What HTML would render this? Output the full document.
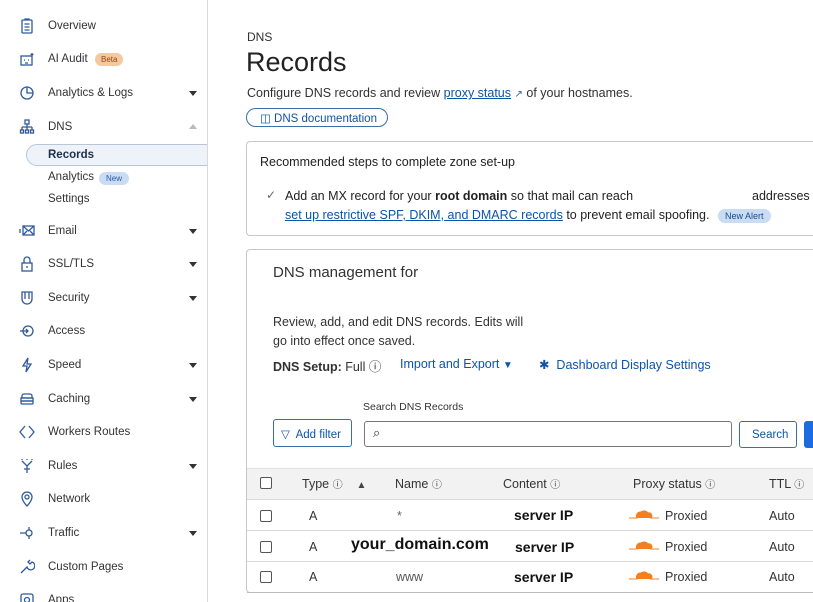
<!DOCTYPE html>
<html><head><meta charset="utf-8"><style>
*{margin:0;padding:0;box-sizing:border-box}
body{width:813px;height:602px;overflow:hidden;background:#fff;font-family:"Liberation Sans",sans-serif;color:#313131;position:relative}
.a{position:absolute;white-space:nowrap}
.sb{position:absolute;left:0;top:0;width:208px;height:602px;border-right:1px solid #d9d9d9;background:#fff;overflow:hidden}
.si{font-size:11.5px;color:#333}
.ic{position:absolute;left:19px;width:16px;height:16px}
.car{position:absolute;left:189px;width:0;height:0;border-left:4px solid transparent;border-right:4px solid transparent;border-top:5px solid #333}
.blue{color:#0b54a8}
.card{position:absolute;border:1px solid #c7c7c7;border-right:none;border-radius:4px 0 0 4px;background:#fff}
.cb{position:absolute;left:260px;width:12px;height:12px;border:1px solid #555;border-radius:2px;background:#fff}
.row{position:absolute;left:247px;width:566px;height:31px;border-top:1px solid #d9d9d9}
.t{font-size:12.5px;color:#333}
.b{font-weight:bold;color:#111;font-size:14px}
.cloud{position:absolute;left:629px;width:30px;height:10px}
</style></head><body>
<div class="sb">
<svg class="ic" style="top:18px" viewBox="0 0 16 16" fill="none" stroke="#2f5a9a" stroke-width="1.3"><rect x="3" y="2" width="10" height="13" rx="1"/><path d="M6 2V1h4v1M5.5 6h5M5.5 9h5M5.5 12h5"/></svg>
<div class="a si" style="left:48px;top:20px">Overview</div>
<svg class="ic" style="top:51px" viewBox="0 0 16 16" fill="none" stroke="#2f5a9a" stroke-width="1.3"><rect x="2" y="5" width="11" height="9"/><path d="M5 9h1M9 9h1M6 12h3M13 2v3M11.5 3.5h3"/></svg>
<div class="a si" style="left:48px;top:53px">AI Audit</div>
<div class="a" style="left:95px;top:53px;font-size:8px;background:#f6c8a0;color:#8a4a10;border-radius:8px;padding:2px 6px">Beta</div>
<svg class="ic" style="top:85px" viewBox="0 0 16 16" fill="none" stroke="#2f5a9a" stroke-width="1.3"><circle cx="8" cy="8" r="6"/><path d="M8 2v6h6"/></svg>
<div class="a si" style="left:48px;top:87px">Analytics &amp; Logs</div><div class="car" style="top:91px"></div>
<svg class="ic" style="top:119px" viewBox="0 0 16 16" fill="none" stroke="#2f5a9a" stroke-width="1.3"><rect x="6" y="1" width="4" height="4"/><path d="M8 5v3M3 8h10M3 8v3M8 8v3M13 8v3"/><rect x="1.5" y="11" width="3" height="3"/><rect x="6.5" y="11" width="3" height="3"/><rect x="11.5" y="11" width="3" height="3"/></svg>
<div class="a si" style="left:48px;top:121px">DNS</div>
<div class="a" style="left:189px;top:124px;border-left:4px solid transparent;border-right:4px solid transparent;border-bottom:5px solid #bbb"></div>
<div class="a" style="left:26px;top:144px;width:190px;height:22px;border:1px solid #b8c6d8;border-radius:11px 0 0 11px;background:#eef3f9"></div>
<div class="a si" style="left:48px;top:149px;font-weight:bold;color:#1d2f4a">Records</div>
<div class="a si" style="left:48px;top:171px">Analytics</div>
<div class="a" style="left:99px;top:172px;font-size:8px;background:#c9dcf4;color:#2a5aa0;border-radius:8px;padding:2px 7px">New</div>
<div class="a si" style="left:48px;top:193px">Settings</div>
<svg class="ic" style="top:223px" viewBox="0 0 16 16" fill="none" stroke="#2f5a9a" stroke-width="1.3"><rect x="4" y="3" width="11" height="9"/><path d="M4 3l5.5 5L15 3M4 12l4-4M15 12l-4-4M1 6v4"/></svg>
<div class="a si" style="left:48px;top:225px">Email</div><div class="car" style="top:229px"></div>
<svg class="ic" style="top:256px" viewBox="0 0 16 16" fill="none" stroke="#2f5a9a" stroke-width="1.3"><rect x="3" y="7" width="10" height="8"/><path d="M5 7V4a3 3 0 016 0v3M8 10v2"/></svg>
<div class="a si" style="left:48px;top:258px">SSL/TLS</div><div class="car" style="top:262px"></div>
<svg class="ic" style="top:290px" viewBox="0 0 16 16" fill="none" stroke="#2f5a9a" stroke-width="1.3"><path d="M3 2h10v7a5 5 0 01-10 0zM6 2v7M10 2v7"/></svg>
<div class="a si" style="left:48px;top:292px">Security</div><div class="car" style="top:296px"></div>
<svg class="ic" style="top:323px" viewBox="0 0 16 16" fill="none" stroke="#2f5a9a" stroke-width="1.3"><circle cx="9" cy="8" r="5"/><path d="M1 8h8M7 6l2 2-2 2"/></svg>
<div class="a si" style="left:48px;top:325px">Access</div>
<svg class="ic" style="top:357px" viewBox="0 0 16 16" fill="none" stroke="#2f5a9a" stroke-width="1.3"><path d="M9 1L4 9h4l-1 6 5-8H8z"/></svg>
<div class="a si" style="left:48px;top:359px">Speed</div><div class="car" style="top:363px"></div>
<svg class="ic" style="top:391px" viewBox="0 0 16 16" fill="none" stroke="#2f5a9a" stroke-width="1.3"><path d="M3 7V5a2 2 0 012-2h6a2 2 0 012 2v2z"/><rect x="2" y="7" width="12" height="3"/><rect x="2" y="10" width="12" height="3" rx="1"/></svg>
<div class="a si" style="left:48px;top:393px">Caching</div><div class="car" style="top:397px"></div>
<svg class="ic" style="top:424px" viewBox="0 0 16 16" fill="none" stroke="#2f5a9a" stroke-width="1.3"><path d="M6 2L1 8l5 6M10 2l5 6-5 6"/></svg>
<div class="a si" style="left:48px;top:426px">Workers Routes</div>
<svg class="ic" style="top:458px" viewBox="0 0 16 16" fill="none" stroke="#2f5a9a" stroke-width="1.3"><path d="M3 3l5 5 5-5M8 8v7M5 11h6M3 1v1M8 1v1M13 1v1"/></svg>
<div class="a si" style="left:48px;top:460px">Rules</div><div class="car" style="top:464px"></div>
<svg class="ic" style="top:491px" viewBox="0 0 16 16" fill="none" stroke="#2f5a9a" stroke-width="1.3"><path d="M8 15s5-5 5-9a5 5 0 00-10 0c0 4 5 9 5 9z"/><circle cx="8" cy="6" r="2"/></svg>
<div class="a si" style="left:48px;top:493px">Network</div>
<svg class="ic" style="top:525px" viewBox="0 0 16 16" fill="none" stroke="#2f5a9a" stroke-width="1.3"><circle cx="10" cy="8" r="3"/><path d="M1 8h6M10 2v3M10 11v3"/></svg>
<div class="a si" style="left:48px;top:527px">Traffic</div><div class="car" style="top:531px"></div>
<svg class="ic" style="top:559px" viewBox="0 0 16 16" fill="none" stroke="#2f5a9a" stroke-width="1.3"><path d="M2 14l6-6a4 4 0 105-5l-2 2-2-2 2-2"/></svg>
<div class="a si" style="left:48px;top:561px">Custom Pages</div>
<svg class="ic" style="top:592px" viewBox="0 0 16 16" fill="none" stroke="#2f5a9a" stroke-width="1.3"><rect x="2" y="2" width="12" height="12" rx="2"/><circle cx="8" cy="8" r="2.5"/></svg>
<div class="a si" style="left:48px;top:594px">Apps</div>
</div>

<div class="a" style="left:247px;top:30px;font-size:12px">DNS</div>
<div class="a" style="left:246px;top:47px;font-size:27px;color:#222">Records</div>
<div class="a" style="left:247px;top:86px;font-size:12.5px">Configure DNS records and review <span class="blue" style="text-decoration:underline">proxy status</span> <span style="font-size:10px;color:#2f5a9a">&#x2197;</span> of your hostnames.</div>
<div class="a" style="left:246px;top:108px;width:142px;height:19px;border:1px solid #3a6ea8;border-radius:10px;font-size:11.5px;color:#0b54a8;padding:2px 0 0 13px">&#9707; DNS documentation</div>

<div class="card" style="left:246px;top:141px;width:568px;height:95px"></div>
<div class="a" style="left:260px;top:155px;font-size:12.5px;color:#222">Recommended steps to complete zone set-up</div>
<div class="a" style="left:266px;top:188px;font-size:12px;color:#666">&#10003;</div>
<div class="a" style="left:285px;top:189px;font-size:12.5px;color:#222">Add an MX record for your <b>root domain</b> so that mail can reach</div>
<div class="a" style="left:752px;top:189px;font-size:12.5px;color:#222">addresses o</div>
<div class="a" style="left:285px;top:208px;font-size:12.5px;color:#222"><span class="blue" style="text-decoration:underline">set up restrictive SPF, DKIM, and DMARC records</span> to prevent email spoofing.</div>
<div class="a" style="left:718px;top:209px;font-size:9px;background:#c9dcf4;color:#1d4a8a;border-radius:8px;padding:2px 7px">New Alert</div>

<div class="card" style="left:246px;top:249px;width:568px;height:344px"></div>
<div class="a" style="left:273px;top:264px;font-size:15px;color:#333">DNS management for</div>
<div class="a" style="left:273px;top:313px;font-size:12.5px;line-height:19px;color:#333">Review, add, and edit DNS records. Edits will<br>go into effect once saved.</div>
<div class="a" style="left:273px;top:356px;font-size:12.5px"><b>DNS Setup:</b> Full &#9432;</div>
<div class="a blue" style="left:400px;top:357px;font-size:12.5px">Import and Export <span style="font-size:10px">&#9660;</span></div>
<div class="a blue" style="left:539px;top:357px;font-size:12.5px">&#10033;&nbsp; Dashboard Display Settings</div>
<div class="a" style="left:363px;top:401px;font-size:10.5px;color:#333">Search DNS Records</div>
<div class="a" style="left:273px;top:419px;width:79px;height:28px;border:1px solid #3a6ea8;border-radius:3px;font-size:11.5px;color:#0b54a8;padding:7px 0 0 7px">&#9661;&nbsp; Add filter</div>
<div class="a" style="left:364px;top:421px;width:368px;height:26px;border:1px solid #777;border-radius:3px;font-size:13px;padding:3px 0 0 8px">&#x2315;</div>
<div class="a" style="left:739px;top:421px;width:58px;height:27px;border:1px solid #3a6ea8;border-radius:3px;font-size:11.5px;color:#0b54a8;padding:7px 0 0 12px">Search</div>
<div class="a" style="left:804px;top:421px;width:12px;height:27px;background:#1a6ce0;border-radius:3px"></div>

<div class="a" style="left:247px;top:468px;width:566px;height:31px;background:#f2f2f2;border-top:1px solid #e0e0e0"></div>
<div class="cb" style="top:477px"></div>
<div class="a t" style="left:302px;top:476px">Type <span style="font-size:10px">&#9432;</span>&nbsp;&nbsp;&nbsp; <span style="font-size:10px;color:#444">&#9650;</span></div>
<div class="a t" style="left:395px;top:476px">Name <span style="font-size:10px">&#9432;</span></div>
<div class="a t" style="left:503px;top:476px">Content <span style="font-size:10px">&#9432;</span></div>
<div class="a t" style="left:633px;top:476px">Proxy status <span style="font-size:10px">&#9432;</span></div>
<div class="a t" style="left:769px;top:476px">TTL <span style="font-size:10px">&#9432;</span></div>

<div class="row" style="top:499px"></div>
<div class="row" style="top:530px"></div>
<div class="row" style="top:561px"></div>
<div class="a" style="left:247px;top:592px;width:566px;border-top:1px solid #bbb"></div>

<div class="cb" style="top:510px"></div><div class="cb" style="top:541px"></div><div class="cb" style="top:571px"></div>
<div class="a t" style="left:309px;top:509px">A</div><div class="a t" style="left:309px;top:540px">A</div><div class="a t" style="left:309px;top:570px">A</div>
<div class="a t" style="left:397px;top:509px;color:#666">*</div>
<div class="a" style="left:351px;top:536px;font-size:16px;font-weight:bold;color:#111">your_domain.com</div>
<div class="a t" style="left:396px;top:570px;color:#555">www</div>
<div class="a b" style="left:514px;top:507px">server IP</div>
<div class="a b" style="left:515px;top:539px">server IP</div>
<div class="a b" style="left:514px;top:569px">server IP</div>
<svg class="cloud" style="top:510px" viewBox="0 0 30 10"><path d="M0 8h8a4 4 0 014-6 5 5 0 017 1 3 3 0 013 5h8" fill="#f38020" stroke="#f38020" stroke-width="1"/></svg>
<svg class="cloud" style="top:541px" viewBox="0 0 30 10"><path d="M0 8h8a4 4 0 014-6 5 5 0 017 1 3 3 0 013 5h8" fill="#f38020" stroke="#f38020" stroke-width="1"/></svg>
<svg class="cloud" style="top:571px" viewBox="0 0 30 10"><path d="M0 8h8a4 4 0 014-6 5 5 0 017 1 3 3 0 013 5h8" fill="#f38020" stroke="#f38020" stroke-width="1"/></svg>
<div class="a t" style="left:665px;top:509px">Proxied</div><div class="a t" style="left:665px;top:540px">Proxied</div><div class="a t" style="left:665px;top:570px">Proxied</div>
<div class="a t" style="left:769px;top:509px">Auto</div><div class="a t" style="left:769px;top:540px">Auto</div><div class="a t" style="left:769px;top:570px">Auto</div>
</body></html>
